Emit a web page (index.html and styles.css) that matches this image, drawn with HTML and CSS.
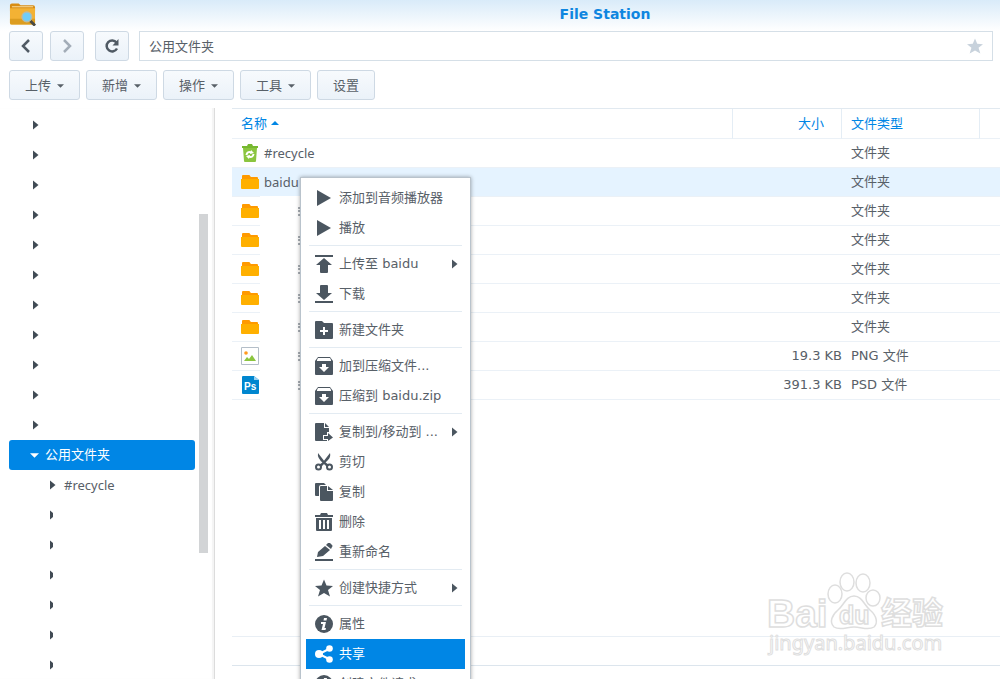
FILE: index.html
```html
<!DOCTYPE html>
<html lang="zh-CN">
<head>
  <meta charset="UTF-8">
  <meta name="viewport" content="width=device-width, initial-scale=1.0">
  <title>File Station</title>
  <link rel="stylesheet" href="styles.css">
</head>
<body>
  <!-- Icon shapes -->
  <svg class="sprite" aria-hidden="true">
    <symbol id="right" viewBox="0 0 6 10"><path d="M0 0.5L5.5 5L0 9.5z"/></symbol>
    <symbol id="down" viewBox="0 0 8 4"><path d="M0 0h8L4 4z"/></symbol>
    <symbol id="folder" viewBox="0 0 18 16">
      <path fill="#ff9a00" d="M1 5V2q0-1 1-1h6q1 0 1 1l1 1h6q1 0 1 1v1z"/>
      <path fill="#ffb000" d="M0 5h18v9q0 1-1 1H1q-1 0-1-1z"/>
    </symbol>
    <symbol id="play" viewBox="0 0 18 18"><path d="M2 1L16 9L2 17z"/></symbol>
    <symbol id="upload" viewBox="0 0 18 18"><path d="M0 0h18v2H0zM9 3l8 7h-4v7q0 1-1 1H6q-1 0-1-1v-7H1z"/></symbol>
    <symbol id="download" viewBox="0 0 18 18"><path d="M0 16h18v2H0zM9 15L1 8h4V1q0-1 1-1h6q1 0 1 1v7h4z"/></symbol>
    <symbol id="newfolder" viewBox="0 0 18 18"><path fill-rule="evenodd" d="M0 1q0-1 1-1h6l2 2h8q1 0 1 1v14q0 1-1 1H1q-1 0-1-1zM8 6v3H5v2h3v3h2v-3h3V9h-3V6z"/></symbol>
    <symbol id="archive" viewBox="0 0 18 18"><path fill-rule="evenodd" d="M3 0h12l3 4v13q0 1-1 1H1q-1 0-1-1V4zM3 1L2 3v1h14V3l-1-2zM7 7v3H4l5 5l5-5h-3V7z"/></symbol>
    <symbol id="moveto" viewBox="0 0 18 18"><path d="M0 1q0-1 1-1h8v5h5v4h-2v3H8v5h4v1H1q-1 0-1-1zM10 0l4 4h-4zM9 13h4v-3l5 4.500l-5 3.500v-2H9z"/></symbol>
    <symbol id="cut" viewBox="0 0 18 18">
      <path d="M3 0l7 9l4 3l-2 2l-4-4Q2 5 3 0zM15 0q1 4-2 7l-7 7l-2-2l4-3z"/>
      <circle cx="3.500" cy="14" r="2.500" fill="none" stroke="currentColor" stroke-width="2"/>
      <circle cx="14.500" cy="14" r="2.500" fill="none" stroke="currentColor" stroke-width="2"/>
    </symbol>
    <symbol id="copy" viewBox="0 0 18 18"><path d="M0 1q0-1 1-1h8l2 2H6q-2 0-2 2v9H1q-1 0-1-1zM5 4q0-1 1-1h6v5h6v9q0 1-1 1H6q-1 0-1-1zM13 3l5 4h-5z"/></symbol>
    <symbol id="trash" viewBox="0 0 18 18"><path fill-rule="evenodd" d="M0 2h5l1-2h6l1 2h5v2H0zM1 5h16v12q0 1-1 1H2q-1 0-1-1zM4 7v9h2V7zM8 7v9h2V7zM12 7v9h2V7z"/></symbol>
    <symbol id="rename" viewBox="0 0 18 18"><path d="M0 16h18v2H0zM2 14l1-5l7-6l5 4l-7 6zM11 2l2-2q1-0.500 2 0l2 2q1 1 0 2l-1 2z"/></symbol>
    <symbol id="star" viewBox="0 0 18 18"><path d="M9 0.500l2.500 6l6.500 0.500l-5 4l2 6.500l-6-3.500l-6 3.500l2-6.500l-5-4l6.500-0.500z"/></symbol>
    <symbol id="info" viewBox="0 0 18 18">
      <circle cx="9" cy="9" r="9"/>
      <path fill="#fff" d="M9 3h3l-0.500 2.500h-3zM6 7h5l-1.500 6h1.500l-0.500 2H6.500l1.500-6H6z"/>
    </symbol>
    <symbol id="share" viewBox="0 0 18 18">
      <path fill="none" stroke="currentColor" stroke-width="2" d="M15 3.500L4 9l11 5.500"/>
      <circle cx="4" cy="9" r="4"/><circle cx="14.500" cy="3.500" r="3.300"/><circle cx="14.500" cy="14.500" r="3.300"/>
    </symbol>
  </svg>

  <header class="titlebar">
    <svg class="app-icon" viewBox="0 0 28 24">
      <path fill="#d88d14" d="M1 3q0-2 2-2h7l2 2h13q2 0 2 2v4H1z"/>
      <path fill="#fbe0a4" d="M3 4h22v1H3z"/>
      <path fill="#f3b234" d="M1 6h26v15q0 2-2 2H3q-2 0-2-2z"/>
      <path fill="#dc9d20" d="M1 17h26v4q0 2-2 2H3q-2 0-2-2z"/>
      <path stroke="#4a4a42" stroke-width="3" d="M22 19l5 5"/>
      <circle cx="18.500" cy="15" r="5" fill="#70cdf8" stroke="#b8bba8" stroke-width="1.500"/>
    </svg>
    <h1>File Station</h1>
  </header>

  <nav class="navbar">
    <button class="btn nav-btn" type="button" aria-label="后退"><svg viewBox="0 0 16 16"><path d="M11 2L5 8l6 6"/></svg></button>
    <button class="btn nav-btn dim" type="button" aria-label="前进"><svg viewBox="0 0 16 16"><path d="M5 2l6 6l-6 6"/></svg></button>
    <button class="btn nav-btn reload" type="button" aria-label="刷新"><svg viewBox="0 0 16 16"><path d="M13 10.500A5.500 5.500 0 1 1 12.500 4.500"/><path class="solid" d="M14.500 1v6.500H8.500z"/></svg></button>
    <div class="path">
      <input type="text" value="公用文件夹" aria-label="路径">
      <button type="button" class="fav" aria-label="收藏"><svg><use href="#star"/></svg></button>
    </div>
  </nav>

  <div class="toolbar">
    <button class="btn" type="button">上传<svg class="caret"><use href="#down"/></svg></button>
    <button class="btn" type="button">新增<svg class="caret"><use href="#down"/></svg></button>
    <button class="btn" type="button">操作<svg class="caret"><use href="#down"/></svg></button>
    <button class="btn" type="button">工具<svg class="caret"><use href="#down"/></svg></button>
    <button class="btn" type="button">设置</button>
  </div>

  <main class="main">
    <aside class="sidebar">
      <ul class="tree">
        <li><button type="button" aria-label="展开"><svg class="arrow"><use href="#right"/></svg></button></li>
        <li><button type="button" aria-label="展开"><svg class="arrow"><use href="#right"/></svg></button></li>
        <li><button type="button" aria-label="展开"><svg class="arrow"><use href="#right"/></svg></button></li>
        <li><button type="button" aria-label="展开"><svg class="arrow"><use href="#right"/></svg></button></li>
        <li><button type="button" aria-label="展开"><svg class="arrow"><use href="#right"/></svg></button></li>
        <li><button type="button" aria-label="展开"><svg class="arrow"><use href="#right"/></svg></button></li>
        <li><button type="button" aria-label="展开"><svg class="arrow"><use href="#right"/></svg></button></li>
        <li><button type="button" aria-label="展开"><svg class="arrow"><use href="#right"/></svg></button></li>
        <li><button type="button" aria-label="展开"><svg class="arrow"><use href="#right"/></svg></button></li>
        <li><button type="button" aria-label="展开"><svg class="arrow"><use href="#right"/></svg></button></li>
        <li><button type="button" aria-label="展开"><svg class="arrow"><use href="#right"/></svg></button></li>
        <li>
          <button type="button" class="selected"><svg class="open"><use href="#down"/></svg>公用文件夹</button>
          <ul class="children">
            <li><button type="button" class="latin"><svg class="arrow"><use href="#right"/></svg>#recycle</button></li>
            <li><button type="button" aria-label="展开"><span class="half"><svg class="arrow"><use href="#right"/></svg></span></button></li>
            <li><button type="button" aria-label="展开"><span class="half"><svg class="arrow"><use href="#right"/></svg></span></button></li>
            <li><button type="button" aria-label="展开"><span class="half"><svg class="arrow"><use href="#right"/></svg></span></button></li>
            <li><button type="button" aria-label="展开"><span class="half"><svg class="arrow"><use href="#right"/></svg></span></button></li>
            <li><button type="button" aria-label="展开"><span class="half"><svg class="arrow"><use href="#right"/></svg></span></button></li>
            <li><button type="button" aria-label="展开"><span class="half"><svg class="arrow"><use href="#right"/></svg></span></button></li>
          </ul>
        </li>
      </ul>
      <div class="scroll"><div class="thumb"></div></div>
    </aside>

    <section class="content">
      <table class="files">
        <thead>
          <tr>
            <th class="col-name">名称<svg class="sort" viewBox="0 0 8 4"><path d="M0 4h8L4 0z"/></svg></th>
            <th class="col-size">大小</th>
            <th class="col-type">文件类型</th>
            <th class="col-end"></th>
          </tr>
        </thead>
        <tbody>
          <tr>
            <td><div class="name latin">
              <svg class="file-icon" viewBox="0 0 18 18">
                <path fill="#76b82f" d="M1 2h5l1-2h4l1 2h5v2H1z"/>
                <path fill="#8bc53f" d="M2 4h14l-1 13q0 1-1 1H4q-1 0-1-1z"/>
                <path fill="none" stroke="#fff" stroke-width="2" d="M5.500 11Q6 7 10.500 8.500M12.500 10Q12 14 7.500 12.500"/>
                <path fill="#fff" d="M10 6l3 3l-4 1zM8 15l-3-3l4-1z"/>
              </svg>#recycle</div></td>
            <td></td><td>文件夹</td><td></td>
          </tr>
          <tr class="active">
            <td><div class="name latin"><svg class="file-icon"><use href="#folder"/></svg>baidu</div></td>
            <td></td><td>文件夹</td><td></td>
          </tr>
          <tr>
            <td><div class="name"><svg class="file-icon"><use href="#folder"/></svg><span class="blank"></span></div></td>
            <td></td><td>文件夹</td><td></td>
          </tr>
          <tr>
            <td><div class="name"><svg class="file-icon"><use href="#folder"/></svg><span class="blank"></span></div></td>
            <td></td><td>文件夹</td><td></td>
          </tr>
          <tr>
            <td><div class="name"><svg class="file-icon"><use href="#folder"/></svg><span class="blank"></span></div></td>
            <td></td><td>文件夹</td><td></td>
          </tr>
          <tr>
            <td><div class="name"><svg class="file-icon"><use href="#folder"/></svg><span class="blank"></span></div></td>
            <td></td><td>文件夹</td><td></td>
          </tr>
          <tr>
            <td><div class="name"><svg class="file-icon"><use href="#folder"/></svg><span class="blank"></span></div></td>
            <td></td><td>文件夹</td><td></td>
          </tr>
          <tr>
            <td><div class="name">
              <svg class="file-icon" viewBox="0 0 18 18">
                <path fill="#fff" stroke="#b4bec8" d="M0.500 0.500h17v17H0.500z"/>
                <circle cx="5" cy="6" r="1.800" fill="#ff9a1e"/>
                <path fill="#8bc53f" d="M3 14l3-4l2 2l3-4l4 6z"/>
              </svg><span class="blank"></span></div></td>
            <td>19.3 KB</td><td>PNG 文件</td><td></td>
          </tr>
          <tr>
            <td><div class="name">
              <svg class="file-icon" viewBox="0 0 18 18">
                <path fill="#0086cf" d="M1 1q0-1 1-1h11l5 4v13q0 1-1 1H2q-1 0-1-1z"/>
                <path fill="#9bd2f2" d="M13 0l5 4h-5z"/>
                <text x="3" y="14" class="ps">Ps</text>
              </svg><span class="blank"></span></div></td>
            <td>391.3 KB</td><td>PSD 文件</td><td></td>
          </tr>
        </tbody>
      </table>
      <footer class="statusbar"></footer>

      <!-- Right click menu -->
      <ul class="menu">
        <li><button type="button"><svg><use href="#play"/></svg>添加到音频播放器</button></li>
        <li><button type="button"><svg><use href="#play"/></svg>播放</button></li>
        <li class="sep"></li>
        <li><button type="button"><svg><use href="#upload"/></svg>上传至 baidu<svg class="arrow more"><use href="#right"/></svg></button></li>
        <li><button type="button"><svg><use href="#download"/></svg>下载</button></li>
        <li class="sep"></li>
        <li><button type="button"><svg><use href="#newfolder"/></svg>新建文件夹</button></li>
        <li class="sep"></li>
        <li><button type="button"><svg><use href="#archive"/></svg>加到压缩文件...</button></li>
        <li><button type="button"><svg><use href="#archive"/></svg>压缩到 baidu.zip</button></li>
        <li class="sep"></li>
        <li><button type="button"><svg><use href="#moveto"/></svg>复制到/移动到 ...<svg class="arrow more"><use href="#right"/></svg></button></li>
        <li><button type="button"><svg><use href="#cut"/></svg>剪切</button></li>
        <li><button type="button"><svg><use href="#copy"/></svg>复制</button></li>
        <li><button type="button"><svg><use href="#trash"/></svg>删除</button></li>
        <li><button type="button"><svg><use href="#rename"/></svg>重新命名</button></li>
        <li class="sep"></li>
        <li><button type="button"><svg><use href="#star"/></svg>创建快捷方式<svg class="arrow more"><use href="#right"/></svg></button></li>
        <li class="sep"></li>
        <li><button type="button"><svg><use href="#info"/></svg>属性</button></li>
        <li><button type="button" class="current"><svg><use href="#share"/></svg>共享</button></li>
        <li><button type="button"><svg><use href="#info"/></svg>创建文件请求</button></li>
      </ul>

      <svg class="watermark" viewBox="0 0 184 90">
        <text x="2" y="57" class="wm-bai">Bai</text>
        <ellipse cx="70" cy="24" rx="7" ry="9"/>
        <ellipse cx="82" cy="12" rx="7" ry="9"/>
        <ellipse cx="98" cy="13" rx="7" ry="9"/>
        <ellipse cx="108" cy="28" rx="7" ry="8"/>
        <path d="M89 26C97 26 99 35 105 40C112 46 113 53 109 57C103 61 97 57 89 57C81 57 75 61 69 57C64 52 67 45 73 40C79 35 81 26 89 26z"/>
        <text x="74" y="54" class="wm-du">du</text>
        <text x="116" y="54" class="wm-cn">经验</text>
        <text x="4" y="80" class="wm-url">jingyan.baidu.com</text>
      </svg>
    </section>
  </main>
</body>
</html>
```
FILE: styles.css
```css
* {
  box-sizing: border-box;
}
body {
  margin: 0;
  height: 100vh;
  display: flex;
  flex-direction: column;
  overflow: hidden;
  background: #fff linear-gradient(#d9ebf9, #fff 31px) no-repeat;
  font-family: "DejaVu Sans", "Noto Sans CJK SC", sans-serif;
  font-size: 13px;
  line-height: 18px;
  color: #586068;
}
button, input {
  font: inherit;
  color: inherit;
  padding: 0;
  border: 0;
  background: none;
}
button {
  display: flex;
  align-items: center;
  cursor: pointer;
}
ul {
  list-style: none;
  margin: 0;
  padding: 0;
}
svg {
  fill: currentColor;
  flex: none;
}
.sprite {
  position: absolute;
  width: 0;
  height: 0;
}
.latin {
  font-family: "Noto Sans", sans-serif;
}

/* Title */
.titlebar {
  display: flex;
  align-items: center;
  height: 31px;
  padding: 0 0 3px 9px;
}
.titlebar h1 {
  flex: 1;
  margin: 0;
  padding-left: 174px;
  text-align: center;
  font-size: 14px;
  color: #0f86e0;
}
.app-icon {
  width: 27px;
  height: 24px;
}

/* Buttons */
.btn {
  justify-content: center;
  height: 30px;
  padding: 1px 15px 0;
  border: 1px solid #ced9e4;
  border-radius: 3px;
  background: linear-gradient(#f7fafd, #ebf2f9);
}
.navbar {
  display: flex;
  gap: 7px;
  padding: 0 7px 0 9px;
}
.nav-btn {
  width: 34px;
  padding: 0;
}
.nav-btn svg {
  width: 16px;
  height: 16px;
  fill: none;
  stroke: #505a64;
  stroke-width: 2.5;
}
.nav-btn .solid {
  fill: #505a64;
  stroke: none;
}
.nav-btn.dim svg {
  stroke: #a3adb8;
}
.reload {
  margin: 0 3px 0 4px;
}
.path {
  flex: 1;
  display: flex;
  height: 30px;
  border: 1px solid #d5dfe7;
  background: #fff;
}
.path input {
  flex: 1;
  min-width: 0;
  padding: 1px 0 0 9px;
  outline: none;
}
.fav {
  justify-content: center;
  width: 35px;
  color: #c8d2dc;
}
.fav svg {
  width: 16px;
  height: 16px;
}
.toolbar {
  display: flex;
  gap: 6px;
  padding: 9px 9px 8px;
}
.caret {
  width: 7px;
  height: 4px;
  margin-left: 6px;
}

/* Folder tree */
.main {
  flex: 1;
  min-height: 0;
  display: flex;
}
.sidebar {
  display: flex;
  width: 215px;
  padding-left: 9px;
  border-right: 1px solid #dcdcdc;
  box-shadow: inset -2px 0 1px #f4f4f4;
}
.tree {
  flex: 1;
  padding-top: 2px;
}
.tree button {
  width: 100%;
  height: 30px;
  padding-left: 24px;
  border-radius: 3px;
}
.tree .selected {
  padding-left: 21px;
  background: #0086e5;
  color: #fff;
}
.tree .children button {
  padding-left: 41px;
}
.arrow {
  width: 6px;
  height: 10px;
  color: #414b55;
}
.latin .arrow {
  margin-right: 8px;
}
.half {
  display: flex;
  width: 3px;
  overflow: hidden;
}
.open {
  width: 9px;
  height: 5px;
  margin-right: 6px;
}
.scroll {
  width: 9px;
  margin: 0 6px 0 4px;
  padding-top: 106px;
}
.thumb {
  width: 9px;
  height: 73%;
  background: #d2d4d6;
}

/* File list */
.content {
  position: relative;
  flex: 1;
  min-width: 0;
  display: flex;
  flex-direction: column;
  margin-left: 17px;
  padding-bottom: 13px;
}
.files {
  width: 100%;
  table-layout: fixed;
  border-spacing: 0;
  border-top: 1px solid #e1e9f0;
}
.files th {
  height: 30px;
  padding: 0 0 0 9px;
  border-right: 1px solid #e4edf5;
  border-bottom: 1px solid #ebf1f7;
  font-weight: normal;
  text-align: left;
  color: #0086e5;
}
.files td {
  height: 29px;
  padding: 0 0 0 9px;
  border-bottom: 1px solid #ebf1f7;
}
.files .col-size {
  width: 109px;
  padding-right: 17px;
  text-align: right;
}
.files .col-type {
  width: 138px;
}
.files .col-end {
  width: 20px;
  padding: 0;
  border-right: 0;
}
.files td:nth-child(2) {
  padding: 0;
  text-align: right;
}
.files .active td {
  background: #e5f3ff;
}
.sort {
  width: 8px;
  height: 4px;
  margin: 0 0 3px 4px;
}
.name {
  display: flex;
  align-items: center;
  gap: 5px;
  height: 28px;
}
.file-icon {
  width: 18px;
  height: 18px;
}
.blank {
  display: flex;
  align-items: center;
  justify-content: flex-end;
  width: 40px;
  height: 30px;
  margin-left: -4px;
  background: #fff;
}
.blank::after {
  content: "";
  height: 9px;
  border-right: 2px dotted #a9afb5;
}
.ps {
  fill: #fff;
  font-size: 10px;
  font-weight: bold;
  font-family: "Liberation Sans", sans-serif;
}
.statusbar {
  height: 30px;
  margin-top: auto;
  border-top: 1px solid #e9eff5;
  border-bottom: 1px solid #dce5ed;
}

/* Context menu, lies over the list */
.menu {
  position: absolute;
  top: 69px;
  left: 68px;
  width: 171px;
  padding: 5px;
  border: 1px solid #b9c3cc;
  background: #fff;
  box-shadow: 0 0 4px rgba(0, 0, 0, 0.35);
}
.menu button {
  width: 100%;
  height: 30px;
  padding: 0 7px 0 9px;
  gap: 6px;
  white-space: nowrap;
}
.menu svg {
  width: 18px;
  height: 18px;
  color: #4b5660;
}
.menu .more {
  width: 6px;
  height: 10px;
  margin-left: auto;
}
.menu .current, .menu .current svg {
  background: #0086e5;
  color: #fff;
}
.menu .sep {
  height: 1px;
  margin: 2px 3px 3px;
  background: #e3ebf2;
}

/* Watermark */
.watermark {
  position: absolute;
  right: 51px;
  bottom: 19px;
  width: 184px;
  height: 90px;
  fill: #fff;
  stroke: #dedede;
  stroke-width: 1.5;
  font-family: "Liberation Sans", sans-serif;
}
.wm-bai {
  font-size: 39px;
  font-weight: bold;
}
.wm-du {
  font-size: 25px;
  font-weight: bold;
}
.wm-cn {
  font-family: "Noto Sans CJK SC", sans-serif;
  font-size: 31px;
  font-weight: bold;
}
.wm-url {
  font-family: "Noto Sans", sans-serif;
  font-size: 20px;
  stroke-width: 1;
}
```
